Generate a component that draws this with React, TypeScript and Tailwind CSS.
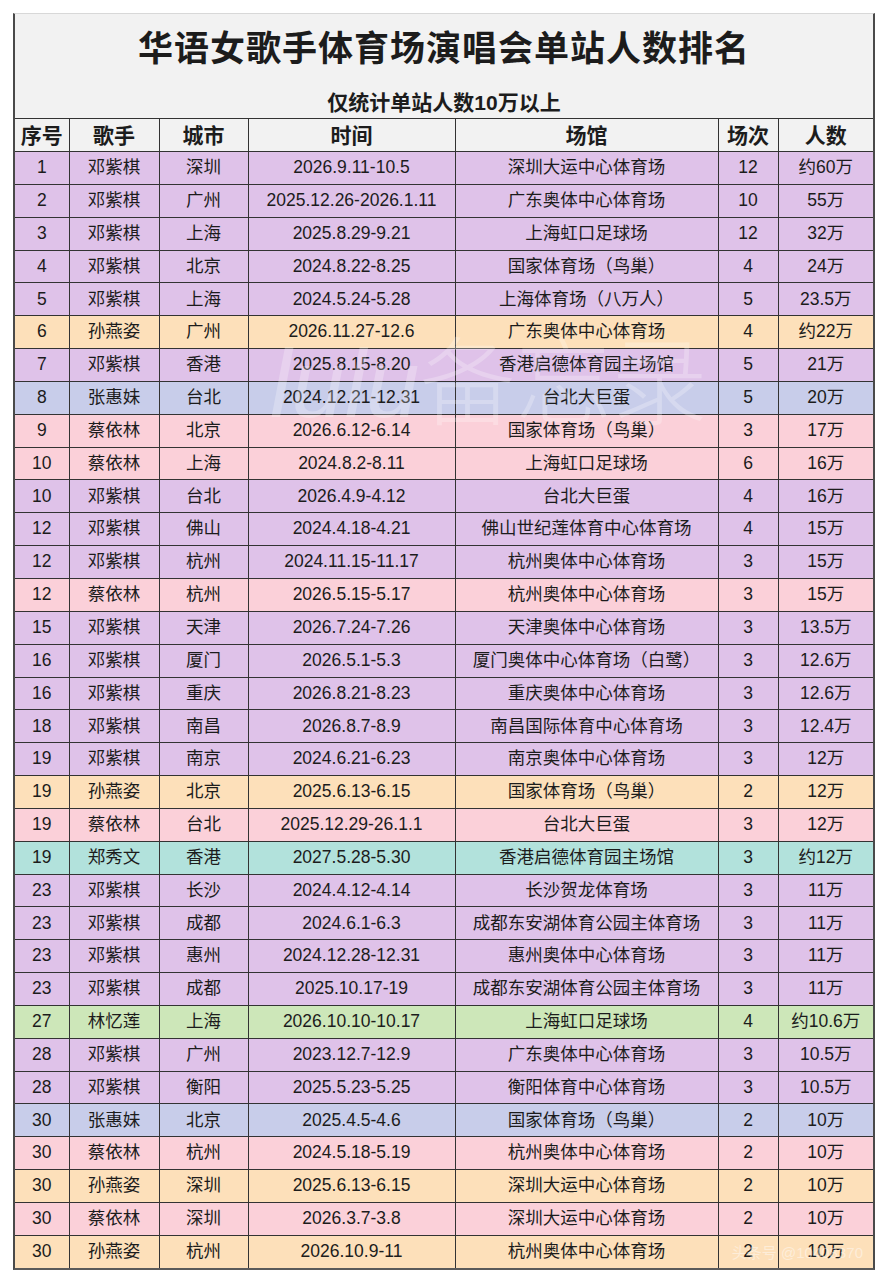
import React from "react";

type Tone = "P" | "O" | "B" | "K" | "T" | "G";

const toneBg: Record<Tone, string> = {
  P: "bg-[#dfc2e9]",
  O: "bg-[#fde0ba]",
  B: "bg-[#c8cdea]",
  K: "bg-[#fbd0d9]",
  T: "bg-[#b2e2dc]",
  G: "bg-[#cde7b9]",
};

const rows: [string, string, string, string, string, string, string, Tone][] = [
  ["1", "邓紫棋", "深圳", "2026.9.11-10.5", "深圳大运中心体育场", "12", "约60万", "P"],
  ["2", "邓紫棋", "广州", "2025.12.26-2026.1.11", "广东奥体中心体育场", "10", "55万", "P"],
  ["3", "邓紫棋", "上海", "2025.8.29-9.21", "上海虹口足球场", "12", "32万", "P"],
  ["4", "邓紫棋", "北京", "2024.8.22-8.25", "国家体育场（鸟巢）", "4", "24万", "P"],
  ["5", "邓紫棋", "上海", "2024.5.24-5.28", "上海体育场（八万人）", "5", "23.5万", "P"],
  ["6", "孙燕姿", "广州", "2026.11.27-12.6", "广东奥体中心体育场", "4", "约22万", "O"],
  ["7", "邓紫棋", "香港", "2025.8.15-8.20", "香港启德体育园主场馆", "5", "21万", "P"],
  ["8", "张惠妹", "台北", "2024.12.21-12.31", "台北大巨蛋", "5", "20万", "B"],
  ["9", "蔡依林", "北京", "2026.6.12-6.14", "国家体育场（鸟巢）", "3", "17万", "K"],
  ["10", "蔡依林", "上海", "2024.8.2-8.11", "上海虹口足球场", "6", "16万", "K"],
  ["10", "邓紫棋", "台北", "2026.4.9-4.12", "台北大巨蛋", "4", "16万", "P"],
  ["12", "邓紫棋", "佛山", "2024.4.18-4.21", "佛山世纪莲体育中心体育场", "4", "15万", "P"],
  ["12", "邓紫棋", "杭州", "2024.11.15-11.17", "杭州奥体中心体育场", "3", "15万", "P"],
  ["12", "蔡依林", "杭州", "2026.5.15-5.17", "杭州奥体中心体育场", "3", "15万", "K"],
  ["15", "邓紫棋", "天津", "2026.7.24-7.26", "天津奥体中心体育场", "3", "13.5万", "P"],
  ["16", "邓紫棋", "厦门", "2026.5.1-5.3", "厦门奥体中心体育场（白鹭）", "3", "12.6万", "P"],
  ["16", "邓紫棋", "重庆", "2026.8.21-8.23", "重庆奥体中心体育场", "3", "12.6万", "P"],
  ["18", "邓紫棋", "南昌", "2026.8.7-8.9", "南昌国际体育中心体育场", "3", "12.4万", "P"],
  ["19", "邓紫棋", "南京", "2024.6.21-6.23", "南京奥体中心体育场", "3", "12万", "P"],
  ["19", "孙燕姿", "北京", "2025.6.13-6.15", "国家体育场（鸟巢）", "2", "12万", "O"],
  ["19", "蔡依林", "台北", "2025.12.29-26.1.1", "台北大巨蛋", "3", "12万", "K"],
  ["19", "郑秀文", "香港", "2027.5.28-5.30", "香港启德体育园主场馆", "3", "约12万", "T"],
  ["23", "邓紫棋", "长沙", "2024.4.12-4.14", "长沙贺龙体育场", "3", "11万", "P"],
  ["23", "邓紫棋", "成都", "2024.6.1-6.3", "成都东安湖体育公园主体育场", "3", "11万", "P"],
  ["23", "邓紫棋", "惠州", "2024.12.28-12.31", "惠州奥体中心体育场", "3", "11万", "P"],
  ["23", "邓紫棋", "成都", "2025.10.17-19", "成都东安湖体育公园主体育场", "3", "11万", "P"],
  ["27", "林忆莲", "上海", "2026.10.10-10.17", "上海虹口足球场", "4", "约10.6万", "G"],
  ["28", "邓紫棋", "广州", "2023.12.7-12.9", "广东奥体中心体育场", "3", "10.5万", "P"],
  ["28", "邓紫棋", "衡阳", "2025.5.23-5.25", "衡阳体育中心体育场", "3", "10.5万", "P"],
  ["30", "张惠妹", "北京", "2025.4.5-4.6", "国家体育场（鸟巢）", "2", "10万", "B"],
  ["30", "蔡依林", "杭州", "2024.5.18-5.19", "杭州奥体中心体育场", "2", "10万", "K"],
  ["30", "孙燕姿", "深圳", "2025.6.13-6.15", "深圳大运中心体育场", "2", "10万", "O"],
  ["30", "蔡依林", "深圳", "2026.3.7-3.8", "深圳大运中心体育场", "2", "10万", "K"],
  ["30", "孙燕姿", "杭州", "2026.10.9-11", "杭州奥体中心体育场", "2", "10万", "O"],
];

const headers = ["序号", "歌手", "城市", "时间", "场馆", "场次", "人数"];
const widths = [54, 90, 89, 207, 263, 60, 95];

const font = { fontFamily: '"Liberation Sans", "Noto Sans CJK SC", sans-serif' };

export default function App() {
  return (
    <div className="min-h-[1280px] w-[889px] bg-white pl-[13px] pt-[13px] text-[#1c1c1c]" style={font}>
      <div className="relative w-[862px] border-x-2 border-b-2 border-t border-x-[#4a4a4a] border-b-[#5a5a5a] border-t-[#d8d8d8]">
        <div className="flex h-[104px] flex-col items-center bg-[#f2f2f2]">
          <div className="mt-[14px] text-[35px] font-bold leading-[42px] tracking-[1px]">华语女歌手体育场演唱会单站人数排名</div>
          <div className="mt-[20px] text-[21px] font-bold leading-[26px]">仅统计单站人数10万以上</div>
        </div>
        <table className="w-full table-fixed border-collapse">
          <colgroup>
            {widths.map((w, i) => (
              <col key={i} style={{ width: w }} />
            ))}
          </colgroup>
          <thead>
            <tr className="h-[33px] bg-[#f2f2f2]">
              {headers.map((h, i) => (
                <th
                  key={h}
                  className={`border-y border-[#333] p-0 text-center text-[21px] font-bold leading-none ${i > 0 ? "border-l" : ""}`}
                >
                  {h}
                </th>
              ))}
            </tr>
          </thead>
          <tbody>
            {rows.map((r, idx) => (
              <tr key={idx} className={`h-[32.85px] ${toneBg[r[7]]}`}>
                {r.slice(0, 7).map((c, i) => (
                  <td
                    key={i}
                    className={`border-[#333] p-0 text-center text-[17.5px] leading-none ${i > 0 ? "border-l" : ""} ${idx < rows.length - 1 ? "border-b" : ""}`}
                  >
                    {c}
                  </td>
                ))}
              </tr>
            ))}
          </tbody>
        </table>
        {/* faint watermark over the table */}
        <div className="pointer-events-none absolute left-[255px] top-[322px] flex items-end text-[96px] font-light leading-none text-white/25">
          <span className="italic">lulu</span>
          <span>备忘录</span>
        </div>
        <div className="pointer-events-none absolute right-[10px] bottom-[4px] text-[15px] text-white/45">头条号 @10408370</div>
      </div>
    </div>
  );
}
